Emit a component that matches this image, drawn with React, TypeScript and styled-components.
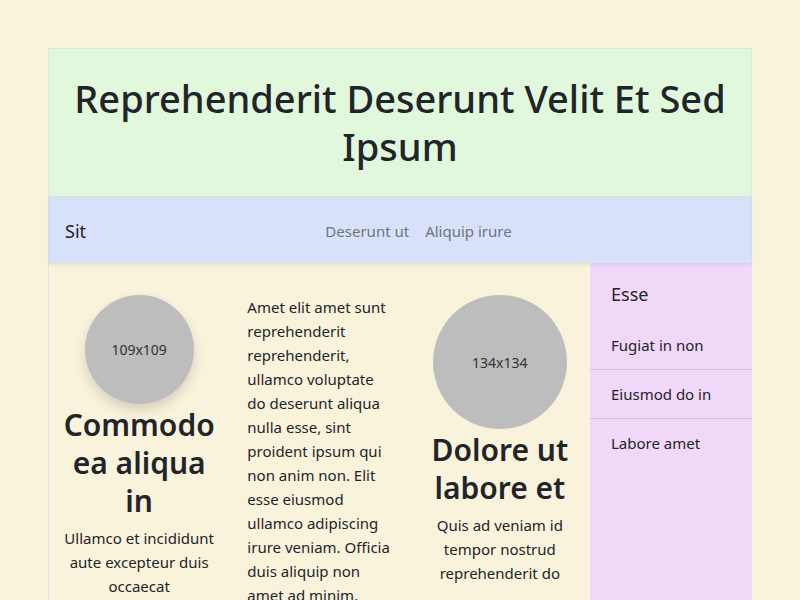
import React from "react";
import styled, { createGlobalStyle } from "styled-components";

const Global = createGlobalStyle`
  html, body { margin: 0; padding: 0; }
  body {
    background: #faf3dc;
    font-family: "Noto Sans", "Open Sans", sans-serif;
    color: #212529;
    overflow: hidden;
  }
`;

const Page = styled.div`
  padding: 48px 48px 0;
`;

const Frame = styled.div`
  border: 1px solid #dfe3e6;
  border-bottom: none;
`;

const Header = styled.header`
  background: #e1f8dc;
  padding: 25px 16px 26px;
  text-align: center;
`;

const Title = styled.h1`
  margin: 0;
  font-size: 38px;
  line-height: 48px;
  font-weight: 500;
`;

const Nav = styled.nav`
  background: #d9e0f9;
  height: 67px;
  display: flex;
  align-items: center;
  padding: 2px 16px 0;
  box-sizing: border-box;
  box-shadow: 0 2px 3px rgba(0, 0, 0, 0.08);
  border-top: 1px solid #d4e6cf;
  position: relative;
  z-index: 1;
`;

const Brand = styled.div`
  font-size: 18px;
  margin-right: 16px;
`;

const Links = styled.div`
  flex: 1;
  display: flex;
  justify-content: center;
  gap: 16px;
`;

const NavLink = styled.a`
  font-size: 15px;
  color: #6c757d;
  text-decoration: none;
`;

const Body = styled.div`
  display: flex;
`;

const Main = styled.main`
  flex: 1;
  min-width: 0;
  display: grid;
  grid-template-columns: repeat(3, minmax(0, 1fr));
  padding-top: 32px;
`;

const Col = styled.section<{ $center?: boolean }>`
  padding: 0 ${(p) => (p.$center ? "12px" : "18px")};
  text-align: ${(p) => (p.$center ? "center" : "left")};
  display: flex;
  flex-direction: column;
  align-items: ${(p) => (p.$center ? "center" : "stretch")};
`;

const Circle = styled.div<{ $size: number; $shadow?: boolean }>`
  width: ${(p) => p.$size}px;
  height: ${(p) => p.$size}px;
  border-radius: 50%;
  background: #bdbdbd;
  display: flex;
  align-items: center;
  justify-content: center;
  font-size: 14px;
  color: #333;
  box-shadow: ${(p) => (p.$shadow ? "0 6px 12px rgba(0,0,0,0.15)" : "none")};
  flex-shrink: 0;
`;

const CardTitle = styled.h2`
  margin: 2px 0 6px;
  font-size: 30px;
  line-height: 38px;
  font-weight: 600;
`;

const Text = styled.p`
  margin: 0;
  font-size: 15px;
  line-height: 24px;
`;

const Sidebar = styled.aside`
  width: 162px;
  background: #f2d8f8;
  height: 340px;
  margin-right: -1px;
`;

const SideHead = styled.div`
  font-size: 18px;
  padding: 19px 21px 15px;
`;

const SideItem = styled.div<{ $last?: boolean }>`
  font-size: 15px;
  height: 48px;
  display: flex;
  align-items: center;
  padding: 0 21px;
  border-bottom: ${(p) => (p.$last ? "none" : "1px solid #d8c0dc")};
`;

export default function App() {
  return (
    <Page>
      <Global />
      <Frame>
        <Header>
          <Title>Reprehenderit Deserunt Velit Et Sed Ipsum</Title>
        </Header>
        <Nav>
          <Brand>Sit</Brand>
          <Links>
            <NavLink href="#">Deserunt ut</NavLink>
            <NavLink href="#">Aliquip irure</NavLink>
          </Links>
        </Nav>
        <Body>
          <Main>
            <Col $center>
              <Circle $size={109} $shadow>109x109</Circle>
              <CardTitle>Commodo ea aliqua in</CardTitle>
              <Text>Ullamco et incididunt aute excepteur duis occaecat</Text>
            </Col>
            <Col>
              <Text>
                Amet elit amet sunt reprehenderit reprehenderit, ullamco voluptate do deserunt
                aliqua nulla esse, sint proident ipsum qui non anim non. Elit esse eiusmod ullamco
                adipiscing irure veniam. Officia duis aliquip non amet ad minim.
              </Text>
            </Col>
            <Col $center>
              <Circle $size={134}>134x134</Circle>
              <CardTitle>Dolore ut labore et</CardTitle>
              <Text>Quis ad veniam id tempor nostrud reprehenderit do</Text>
            </Col>
          </Main>
          <Sidebar>
            <SideHead>Esse</SideHead>
            <SideItem>Fugiat in non</SideItem>
            <SideItem>Eiusmod do in</SideItem>
            <SideItem $last>Labore amet</SideItem>
          </Sidebar>
        </Body>
      </Frame>
    </Page>
  );
}
